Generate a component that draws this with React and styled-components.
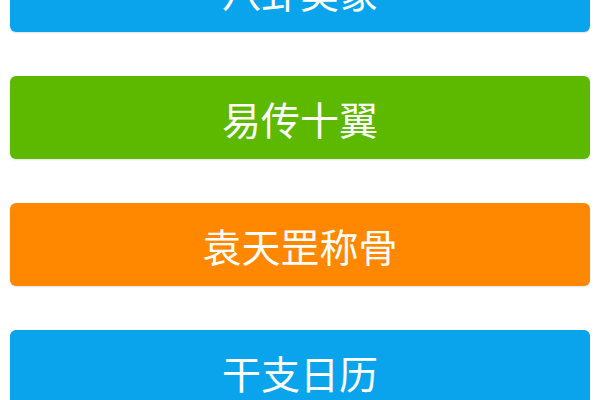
import React from "react";
import styled, { createGlobalStyle } from "styled-components";

const Global = createGlobalStyle`
  html, body { margin: 0; padding: 0; background: #ffffff; overflow: hidden; }
  body { font-family: "Noto Sans CJK SC", "Noto Sans", sans-serif; }
`;

const List = styled.div`
  display: flex;
  flex-direction: column;
  gap: 44px;
  padding: 0 10px;
  margin-top: -51px;
`;

const colors = {
  blue: "#0aa4ec",
  green: "#5cb900",
  orange: "#ff8800",
};

const MenuButton = styled.button`
  display: flex;
  align-items: center;
  justify-content: center;
  height: 83px;
  width: 100%;
  border: none;
  border-radius: 6px;
  background: ${(p) => colors[p.$tone]};
  color: #ffffff;
  font-family: "Noto Sans CJK SC", sans-serif;
  font-size: 39px;
  font-weight: 400;
  letter-spacing: 0;
  padding: 0;
  box-shadow: 0 1px 2px rgba(0, 0, 0, 0.12);
  cursor: pointer;
`;

const items = [
  { label: "八卦类象", tone: "blue" },
  { label: "易传十翼", tone: "green" },
  { label: "袁天罡称骨", tone: "orange" },
  { label: "干支日历", tone: "blue" },
];

export default function App() {
  return (
    <>
      <Global />
      <List>
        {items.map((it) => (
          <MenuButton key={it.label} $tone={it.tone}>
            {it.label}
          </MenuButton>
        ))}
      </List>
    </>
  );
}
